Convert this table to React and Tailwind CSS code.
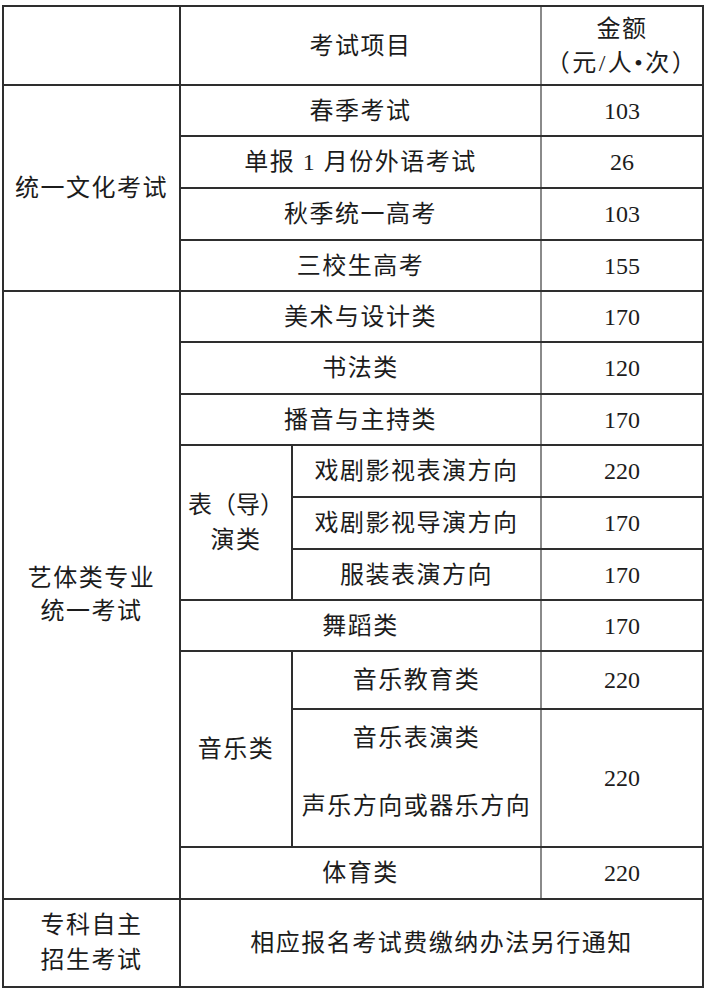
import React from "react";

const cjk = { fontFamily: '"Liberation Serif", "Noto Sans CJK SC", serif' };

function Cell({ className = "", children }) {
  return (
    <div
      className={
        "bg-white flex flex-col items-center justify-center text-center text-[24px] tracking-[1.5px] text-[#1c1c1c] " +
        className
      }
    >
      {children}
    </div>
  );
}

function Num({ className = "", children }) {
  return (
    <div
      className={
        "bg-white flex items-center justify-center text-[24px] text-[#1c1c1c] shadow-[-2px_0_0_#8a8a8a] " +
        className
      }
    >
      {children}
    </div>
  );
}

export default function App() {
  return (
    <div className="w-[705px] h-[993px] bg-white overflow-hidden" style={cjk}>
      <div className="ml-[2px] mt-[5px] w-[702px] grid grid-cols-[175px_110px_247px_160px] grid-rows-[77px_49px_50px_50px_49px_49px_50px_49px_50px_50px_49px_49px_56px_136px_50px_86px] gap-[2px] p-[2px] bg-[#2e2e2e]">
        {/* header */}
        <Cell className="col-start-1 row-start-1" />
        <Cell className="col-start-2 col-span-2 row-start-1">考试项目</Cell>
        <Cell className="col-start-4 row-start-1 leading-[34px] tracking-normal shadow-[-2px_0_0_#8a8a8a]">
          <span className="tracking-[1.5px]">金额</span>
          <span className="tracking-[2.5px] whitespace-nowrap">（元/人•次）</span>
        </Cell>

        {/* 统一文化考试 */}
        <Cell className="col-start-1 row-start-2 row-span-4">统一文化考试</Cell>
        <Cell className="col-start-2 col-span-2 row-start-2">春季考试</Cell>
        <Num className="col-start-4 row-start-2">103</Num>
        <Cell className="col-start-2 col-span-2 row-start-3">单报 1 月份外语考试</Cell>
        <Num className="col-start-4 row-start-3">26</Num>
        <Cell className="col-start-2 col-span-2 row-start-4">秋季统一高考</Cell>
        <Num className="col-start-4 row-start-4">103</Num>
        <Cell className="col-start-2 col-span-2 row-start-5">三校生高考</Cell>
        <Num className="col-start-4 row-start-5">155</Num>

        {/* 艺体类 */}
        <Cell className="col-start-1 row-start-6 row-span-10 leading-[33px]">
          <span>艺体类专业</span>
          <span>统一考试</span>
        </Cell>
        <Cell className="col-start-2 col-span-2 row-start-6">美术与设计类</Cell>
        <Num className="col-start-4 row-start-6">170</Num>
        <Cell className="col-start-2 col-span-2 row-start-7">书法类</Cell>
        <Num className="col-start-4 row-start-7">120</Num>
        <Cell className="col-start-2 col-span-2 row-start-8">播音与主持类</Cell>
        <Num className="col-start-4 row-start-8">170</Num>

        <Cell className="col-start-2 row-start-9 row-span-3 leading-[35px] tracking-normal">
          <span>表（导）</span>
          <span className="tracking-[1.5px]">演类</span>
        </Cell>
        <Cell className="col-start-3 row-start-9">戏剧影视表演方向</Cell>
        <Num className="col-start-4 row-start-9">220</Num>
        <Cell className="col-start-3 row-start-10">戏剧影视导演方向</Cell>
        <Num className="col-start-4 row-start-10">170</Num>
        <Cell className="col-start-3 row-start-11">服装表演方向</Cell>
        <Num className="col-start-4 row-start-11">170</Num>

        <Cell className="col-start-2 col-span-2 row-start-12">舞蹈类</Cell>
        <Num className="col-start-4 row-start-12">170</Num>

        <Cell className="col-start-2 row-start-13 row-span-2">音乐类</Cell>
        <Cell className="col-start-3 row-start-13">音乐教育类</Cell>
        <Num className="col-start-4 row-start-13">220</Num>
        <Cell className="col-start-3 row-start-14 leading-[34px] pb-3">
          <span>音乐表演类</span>
          <span>&nbsp;</span>
          <span>声乐方向或器乐方向</span>
        </Cell>
        <Num className="col-start-4 row-start-14">220</Num>

        <Cell className="col-start-2 col-span-2 row-start-15">体育类</Cell>
        <Num className="col-start-4 row-start-15">220</Num>

        {/* 专科 */}
        <Cell className="col-start-1 row-start-16 leading-[35px]">
          <span>专科自主</span>
          <span>招生考试</span>
        </Cell>
        <Cell className="col-start-2 col-span-3 row-start-16">相应报名考试费缴纳办法另行通知</Cell>
      </div>
    </div>
  );
}
